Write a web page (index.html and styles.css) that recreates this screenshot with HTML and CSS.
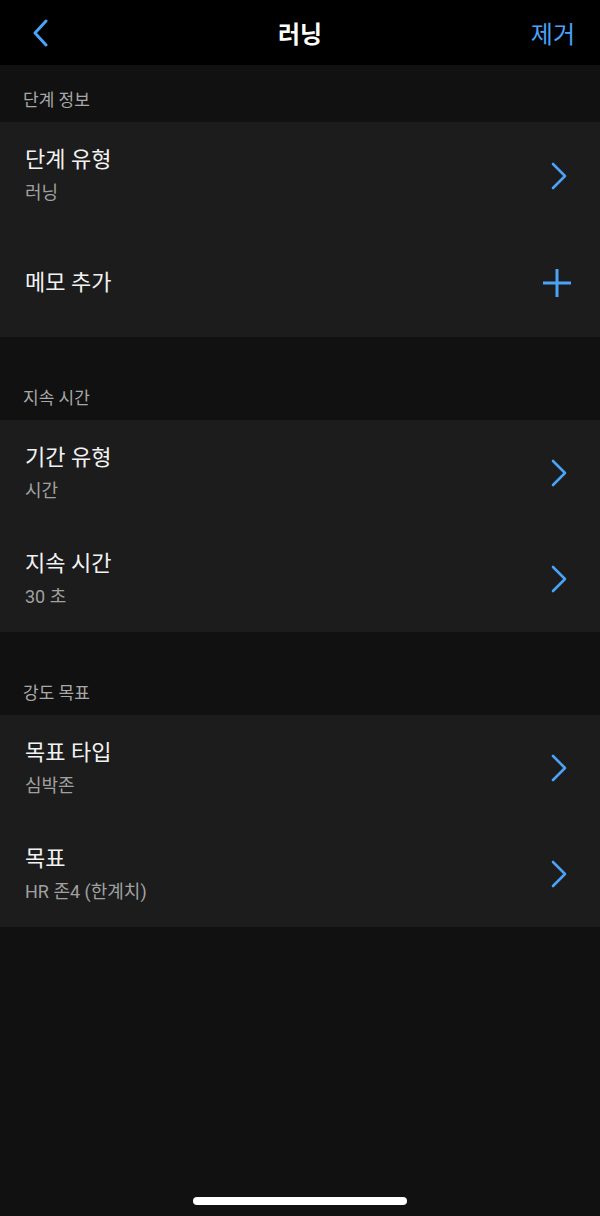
FILE: index.html
```html
<!DOCTYPE html>
<html lang="ko">

<head>
  <meta charset="UTF-8">
  <meta name="viewport" content="width=device-width, initial-scale=1.0">
  <title>러닝</title>
  <link rel="stylesheet" href="styles.css">
</head>

<body>

  <header class="topbar">
    <button class="back" aria-label="뒤로">
      <svg width="16" height="28" viewBox="0 0 16 28">
        <path d="M14 2 L3 14 L14 26" fill="none" stroke="#4aa3f7" stroke-width="3" stroke-linecap="round" stroke-linejoin="round" />
      </svg>
    </button>
    <h1 class="title">러닝</h1>
    <button class="remove">제거</button>
  </header>

  <section class="section first">
    <div class="section-label">단계 정보</div>
    <div class="card">
      <div class="row">
        <div class="text">
          <div class="row-title">단계 유형</div>
          <div class="row-sub">러닝</div>
        </div>
        <svg class="chevron" width="18" height="28" viewBox="0 0 18 28">
          <path d="M3 2 L15 14 L3 26" fill="none" stroke="#4aa3f7" stroke-width="2.6" stroke-linecap="round" stroke-linejoin="round" />
        </svg>
      </div>
      <div class="row">
        <div class="text single">
          <div class="row-title">메모 추가</div>
        </div>
        <svg class="plus" width="30" height="30" viewBox="0 0 30 30">
          <path d="M15 1 V29 M1 15 H29" fill="none" stroke="#4aa3f7" stroke-width="3" />
        </svg>
      </div>
    </div>
  </section>

  <section class="section">
    <div class="section-label">지속 시간</div>
    <div class="card">
      <div class="row">
        <div class="text">
          <div class="row-title">기간 유형</div>
          <div class="row-sub">시간</div>
        </div>
        <svg class="chevron" width="18" height="28" viewBox="0 0 18 28">
          <path d="M3 2 L15 14 L3 26" fill="none" stroke="#4aa3f7" stroke-width="2.6" stroke-linecap="round" stroke-linejoin="round" />
        </svg>
      </div>
      <div class="row">
        <div class="text">
          <div class="row-title">지속 시간</div>
          <div class="row-sub">30 초</div>
        </div>
        <svg class="chevron" width="18" height="28" viewBox="0 0 18 28">
          <path d="M3 2 L15 14 L3 26" fill="none" stroke="#4aa3f7" stroke-width="2.6" stroke-linecap="round" stroke-linejoin="round" />
        </svg>
      </div>
    </div>
  </section>

  <section class="section">
    <div class="section-label">강도 목표</div>
    <div class="card">
      <div class="row">
        <div class="text">
          <div class="row-title">목표 타입</div>
          <div class="row-sub">심박존</div>
        </div>
        <svg class="chevron" width="18" height="28" viewBox="0 0 18 28">
          <path d="M3 2 L15 14 L3 26" fill="none" stroke="#4aa3f7" stroke-width="2.6" stroke-linecap="round" stroke-linejoin="round" />
        </svg>
      </div>
      <div class="row">
        <div class="text">
          <div class="row-title">목표</div>
          <div class="row-sub">HR 존4 (한계치)</div>
        </div>
        <svg class="chevron" width="18" height="28" viewBox="0 0 18 28">
          <path d="M3 2 L15 14 L3 26" fill="none" stroke="#4aa3f7" stroke-width="2.6" stroke-linecap="round" stroke-linejoin="round" />
        </svg>
      </div>
    </div>
  </section>

  <div class="spacer"></div>
  <div class="home-bar"></div>

</body>

</html>
```

FILE: styles.css
```css
html,
body {
  height: 100%;
}

body {
  margin: 0;
  display: flex;
  flex-direction: column;
  background-color: #111111;
  color: #f2f2f2;
  font-family: Roboto, "Noto Sans CJK KR", sans-serif;
}

.topbar {
  height: 65px;
  flex-shrink: 0;
  background-color: #000;
  display: flex;
  align-items: center;
  justify-content: space-between;
  padding: 0 25px 0 32px;
  position: relative;
}

.topbar button {
  background: none;
  border: none;
  padding: 0;
  cursor: pointer;
  font-family: inherit;
}

.back {
  display: flex;
  margin-top: 1px;
}

.title {
  position: absolute;
  left: 0;
  right: 0;
  margin: 0;
  text-align: center;
  font-size: 24px;
  font-weight: 700;
  color: #fff;
  pointer-events: none;
}

.remove {
  color: #4aa3f7;
  font-size: 24px;
  margin-top: -1px;
}

.section {
  padding-top: 26px;
}

.section.first {
  padding-top: 0;
}

.section-label {
  height: 57px;
  box-sizing: border-box;
  padding: 9px 23px 0;
  display: flex;
  align-items: center;
  font-size: 17px;
  color: #a8a8a8;
}

.card {
  background-color: #1c1c1c;
}

.row {
  height: 106px;
  display: flex;
  align-items: center;
  justify-content: space-between;
  padding: 0 30px 0 25px;
}

.first .row:first-child {
  height: 107px;
}

.first .row:last-child {
  height: 108px;
}

.text {
  margin-bottom: 2px;
}

.text.single {
  margin-bottom: 0;
}

.row-title {
  font-size: 22px;
  line-height: 30px;
  color: #f2f2f2;
}

.row-sub {
  font-size: 18px;
  line-height: 22px;
  margin-top: 7px;
  color: #a0a0a0;
}

.chevron {
  margin-right: 2px;
}

.plus {
  margin-right: -2px;
}

.spacer {
  flex: 1;
}

.home-bar {
  width: 214px;
  height: 8px;
  border-radius: 4px;
  background-color: #fff;
  align-self: center;
  margin-bottom: 11px;
}
```
